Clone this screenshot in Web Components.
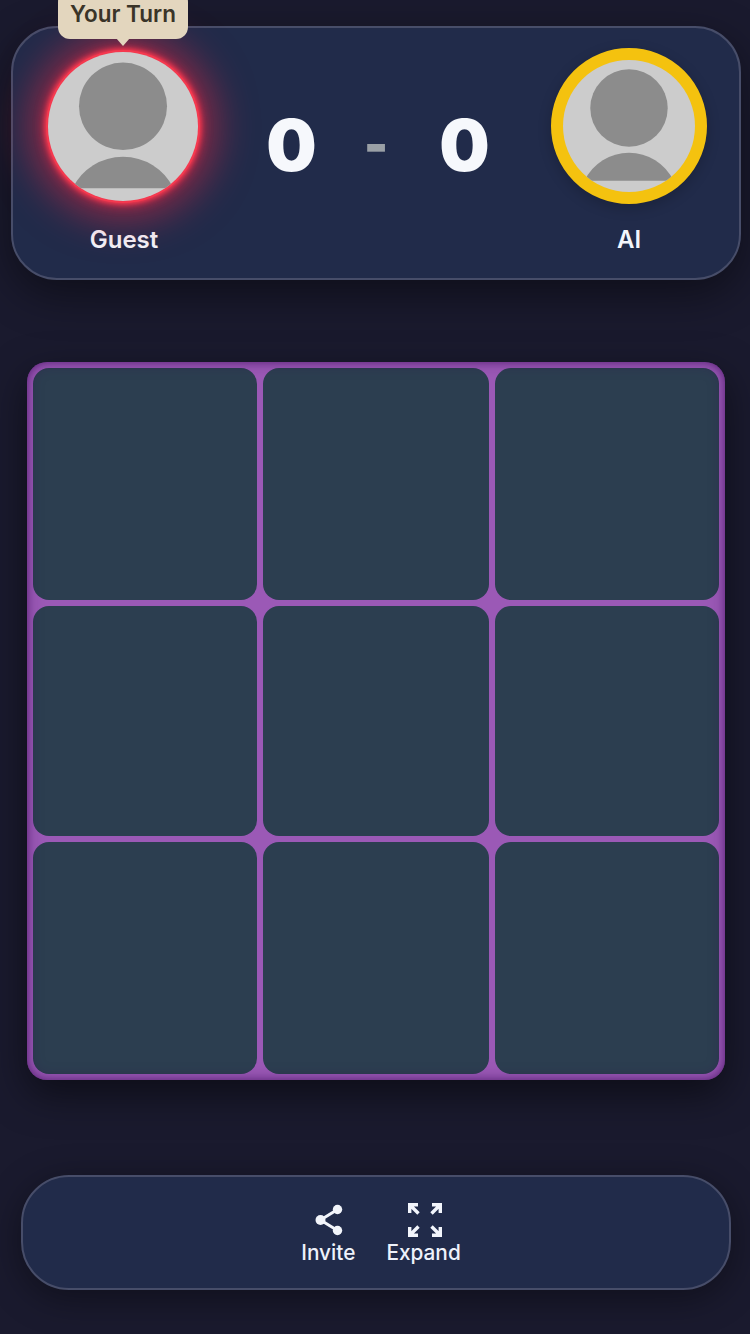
<!DOCTYPE html>
<html><head><meta charset="utf-8">
<style>
html,body{margin:0;padding:0;height:100%}
body{background:#1a1a2e;font-family:Inter,"Liberation Sans",sans-serif;overflow:hidden}
</style></head><body>
<game-app></game-app>
<script>
function def(name, css, html){
  customElements.define(name, class extends HTMLElement{
    constructor(){super();const s=this.attachShadow({mode:'open'});s.innerHTML='<style>'+css+'</style>'+html;}
  });
}
def('player-avatar',`
:host{display:block;box-sizing:border-box;border-radius:50%;position:relative}
.clip{display:block;width:100%;height:100%;border-radius:50%;overflow:hidden}
svg{display:block;width:100%;height:100%}
:host([variant=active]){width:154px;height:153px;margin-right:2px;border:2px solid #f5394f;background:#f5394f;box-shadow:0 0 5px 1px #ff3a50,0 0 10px 3px rgba(235,45,75,.55),0 0 40px 14px rgba(225,40,70,.62)}
:host([variant=ai]){width:156px;height:156px;border:12px solid #f4c20f;background:#f4c20f;box-shadow:0 4px 14px rgba(0,0,0,.2)}
`,`<span class="clip"><svg viewBox="0 0 151 151" preserveAspectRatio="none" aria-hidden="true"><rect width="151" height="151" fill="#ccc"/><circle cx="75.5" cy="55" r="44.3" fill="#8c8c8c"/><path d="M24.7 138a56.4 56.4 0 0 1 101.6 0z" fill="#8c8c8c"/></svg></span>`);
def('turn-tip',`
:host{display:block;position:absolute;left:45px;top:-38px;width:130px;height:48.7px;background:#e3d6be;border-radius:12px;color:#3a3428;font:600 22.5px/48px Inter,sans-serif;text-align:center;white-space:nowrap;z-index:2}
:host::after{content:"";position:absolute;left:58px;top:48px;border:7.5px solid transparent;border-top:8px solid #e3d6be;border-bottom:0}
`,`<slot></slot>`);
def('player-slot',`
:host{display:flex;flex-direction:column;align-items:center;width:160px;color:#f2f5fb;font:600 24px/28px Inter,sans-serif}
.av{height:156px;display:flex;align-items:center;justify-content:center}
.name{margin-top:22px}
`,`<div class="av"><slot name="avatar"></slot></div><div class="name"><slot></slot></div>`);
def('score-board',`
:host{display:flex;align-items:center;justify-content:center;gap:49px;width:224px;height:156px;padding:38px 0 0 3px;box-sizing:border-box;color:#f6f8fc;font:900 71px/1 Inter,sans-serif}
.d{color:#9aa0a6;font-size:52px;margin:0 2px 0 -2px}
`,`<span>0</span><span class="d">-</span><span>0</span>`);
def('score-card',`
:host{display:flex;box-sizing:border-box;justify-content:space-between;align-items:flex-start;position:relative;margin:26px 0 0 11px;width:730px;height:254px;padding:20px 30px 0 31px;background:#212b4a;border:2px solid #474d69;border-radius:46px;box-shadow:0 14px 44px rgba(0,0,0,.45)}
`,`<slot></slot>`);
def('board-cell',`:host{display:block;background:#2c3e50;border-radius:16px}`,``);
def('game-board',`
:host{display:grid;box-sizing:border-box;grid-template-columns:224px 226px 224px;grid-template-rows:232px 230px 232px;gap:6px;padding:6px;width:698px;height:718px;margin:82px 0 0 27px;background:#9b59b6;border-radius:20px;position:relative;box-shadow:0 14px 38px rgba(0,0,0,.5)}
.shade{position:absolute;inset:0;border-radius:20px;box-shadow:inset 0 0 6px rgba(50,0,80,.4),inset 0 0 16px rgba(50,0,80,.4);pointer-events:none}
`,`<slot></slot><div class="shade"></div>`);
def('bar-button',`
:host{display:flex;flex-direction:column;align-items:center;color:#eef2fb;font:500 20.8px/26px Inter,sans-serif;white-space:nowrap}
.i{height:36px;display:flex;align-items:center;justify-content:center;margin-bottom:2px}
`,`<div class="i"><slot name="icon"></slot></div><slot></slot>`);
def('action-bar',`
:host{display:flex;box-sizing:border-box;justify-content:center;align-items:flex-start;gap:31px;width:710px;height:115px;margin:95px 0 0 21px;padding:25px 0 0 10px;background:#212b4a;border:2px solid #474d69;border-radius:48px;box-shadow:0 8px 36px rgba(0,0,0,.4)}
`,`<slot></slot>`);
def('game-app',`:host{display:block;width:750px;height:1334px;overflow:hidden}`,`
<score-card>
  <turn-tip>Your Turn</turn-tip>
  <player-slot><player-avatar slot="avatar" variant="active"></player-avatar>Guest</player-slot>
  <score-board></score-board>
  <player-slot><player-avatar slot="avatar" variant="ai"></player-avatar>AI</player-slot>
</score-card>
<game-board>
  <board-cell></board-cell><board-cell></board-cell><board-cell></board-cell>
  <board-cell></board-cell><board-cell></board-cell><board-cell></board-cell>
  <board-cell></board-cell><board-cell></board-cell><board-cell></board-cell>
</game-board>
<action-bar>
  <bar-button><svg slot="icon" style="margin-left:2px" width="30" height="34" viewBox="0 0 30 34" fill="#f2f5fb"><path d="M23.5 6.5 6.5 17l17 10.5" fill="none" stroke="#f2f5fb" stroke-width="3"/><circle cx="23.5" cy="6.5" r="4.7"/><circle cx="6.5" cy="17" r="5"/><circle cx="23.5" cy="27.5" r="4.7"/></svg>Invite</bar-button>
  <bar-button><svg slot="icon" style="margin-left:2px" width="36" height="36" viewBox="0 0 36 36" fill="none" stroke="#f2f5fb" stroke-width="3.4"><path d="M2.7 11V2.7H11M3 3l8.5 8.5"/><path d="M25 2.7h8.3V11M33 3l-8.5 8.5"/><path d="M2.7 25v8.3H11M3 33l8.5-8.5"/><path d="M33.3 25v8.3H25M33 33l-8.5-8.5"/></svg>Expand</bar-button>
</action-bar>`);
</script>
</body></html>
